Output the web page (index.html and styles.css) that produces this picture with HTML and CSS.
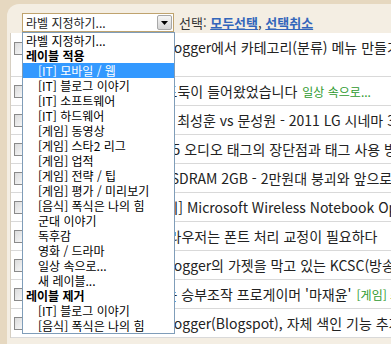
FILE: index.html
```html
<!DOCTYPE html>
<html lang="ko">
<head>
    <meta charset="UTF-8">
    <title>글 목록 - 라벨 지정</title>
    <link rel="stylesheet" href="styles.css">
</head>
<body>
    <div class="frame">
        <div class="toolbar">
            <div class="label-select">
                <span class="select-text">라벨 지정하기...</span>
                <span class="select-arrow">
                    <svg width="7" height="4" viewBox="0 0 7 4"><path d="M0 0h7L3.5 4z" fill="#000"/></svg>
                </span>
                <ul class="select-menu">
                    <li>라벨 지정하기...</li>
                    <li class="group">레이블 적용</li>
                    <li class="sub selected">[IT] 모바일 / 웹</li>
                    <li class="sub">[IT] 블로그 이야기</li>
                    <li class="sub">[IT] 소프트웨어</li>
                    <li class="sub">[IT] 하드웨어</li>
                    <li class="sub">[게임] 동영상</li>
                    <li class="sub">[게임] 스타2 리그</li>
                    <li class="sub">[게임] 업적</li>
                    <li class="sub">[게임] 전략 / 팁</li>
                    <li class="sub">[게임] 평가 / 미리보기</li>
                    <li class="sub">[음식] 폭식은 나의 힘</li>
                    <li class="sub">군대 이야기</li>
                    <li class="sub">독후감</li>
                    <li class="sub">영화 / 드라마</li>
                    <li class="sub">일상 속으로...</li>
                    <li class="sub">새 레이블...</li>
                    <li class="group">레이블 제거</li>
                    <li class="sub">[IT] 블로그 이야기</li>
                    <li class="sub">[음식] 폭식은 나의 힘</li>
                </ul>
            </div>
            <span class="pick">선택: <a href="#">모두선택</a>, <a href="#">선택취소</a></span>
        </div>

        <ul class="posts">
            <li class="post first">
                <span class="check"></span>
                <span class="title">구글 블로그 서비스인 Blogger에서 카테고리(분류) 메뉴 만들기</span>
            </li>
            <li class="post">
                <span class="check"></span>
                <span class="title">여행 간 사이 우리집에 도둑이 들어왔었습니다</span>
                <span class="tag">일상 속으로...</span>
            </li>
            <li class="post">
                <span class="check"></span>
                <span class="title">[스타2 GSL 코드S 결승] 최성훈 vs 문성원 - 2011 LG 시네마 3D GSL</span>
            </li>
            <li class="post">
                <span class="check"></span>
                <span class="title">차세대 웹 표준인 HTML5 오디오 태그의 장단점과 태그 사용 방법</span>
            </li>
            <li class="post">
                <span class="check"></span>
                <span class="title">PC 메모리 가격, DDR3 SDRAM 2GB - 2만원대 붕괴와 앞으로의 전망</span>
            </li>
            <li class="post">
                <span class="check"></span>
                <span class="title">[무선 마우스 제품 사용기] Microsoft Wireless Notebook Optical Mouse 4000</span>
            </li>
            <li class="post">
                <span class="check"></span>
                <span class="title">윈도우 XP 환경의 웹 브라우저는 폰트 처리 교정이 필요하다</span>
            </li>
            <li class="post">
                <span class="check"></span>
                <span class="title">한국에서 구글 블로그 Blogger의 가젯을 막고 있는 KCSC(방송통신심의위원회)</span>
            </li>
            <li class="post">
                <span class="check"></span>
                <span class="title">e스포츠 최악의 배신자는 승부조작 프로게이머 '마재윤'</span>
                <span class="tag">[게임] 스타2 리그</span>
            </li>
            <li class="post">
                <span class="check"></span>
                <span class="title">구글의 블로그 서비스 Blogger(Blogspot), 자체 색인 기능 추가</span>
            </li>
        </ul>
    </div>
</body>
</html>
```

FILE: styles.css
```css
body {
    margin: 0;
    background-color: #e6d8c0;
    font-family: "Noto Sans CJK KR", sans-serif;
    color: #222;
    overflow: hidden;
}
.frame {
    margin: 4px 0 0 7px;
    padding-left: 3px;
    background-color: #f4eee3;
    border-top-left-radius: 12px;
    height: 340px;
}
.toolbar {
    display: flex;
    align-items: flex-start;
    height: 19px;
    padding: 9px 0 1px 12px;
    white-space: nowrap;
}
.label-select {
    position: relative;
    width: 150px;
    height: 17px;
    border: 1px solid #bfa36e;
    background-color: #fff;
    font-size: 12px;
}
.select-text {
    display: block;
    padding-left: 3px;
    line-height: 17px;
}
.select-arrow {
    position: absolute;
    top: 1px;
    right: 1px;
    width: 15px;
    height: 15px;
    box-sizing: border-box;
    border: 1px solid #a8a8a8;
    border-radius: 2px;
    background: linear-gradient(#f6f6f6, #d4d4d4);
    display: flex;
    align-items: center;
    justify-content: center;
}
.select-menu {
    position: absolute;
    top: 18px;
    left: -1px;
    width: 151px;
    margin: 0;
    padding: 0;
    list-style: none;
    background-color: #fff;
    border: 1px solid #7f9db9;
    z-index: 2;
}
.select-menu li {
    height: 15px;
    line-height: 15px;
    padding-left: 3px;
    color: #000;
}
.select-menu .group {
    font-weight: bold;
}
.select-menu .sub {
    padding-left: 15px;
}
.select-menu .selected {
    background-color: #3399ff;
    color: #fff;
}
.pick {
    margin-left: 5px;
    font-size: 13px;
    line-height: 19px;
    color: #333;
}
.pick a {
    color: #3366bb;
    font-weight: bold;
}
.posts {
    margin: 0;
    padding: 0;
    list-style: none;
    background-color: #fff;
    border-left: 1px solid #d6cfc2;
}
.post {
    display: flex;
    align-items: center;
    height: 28px;
    padding-left: 3px;
    border-bottom: 1px solid #d9d9d9;
    white-space: nowrap;
    overflow: hidden;
}
.post.first {
    height: 43px;
    align-items: flex-start;
}
.post.first .check {
    margin-top: 9px;
}
.post.first .title {
    margin-top: 6px;
}
.check {
    flex: none;
    width: 11px;
    height: 11px;
    margin-right: 6px;
    border: 1px solid #8a8a8a;
    background: linear-gradient(135deg, #dcdcdc, #fbfbfb);
}
.title {
    font-size: 14px;
    line-height: 17px;
}
.tag {
    margin-left: 5px;
    font-size: 12px;
    color: #2e9a2e;
}
```
